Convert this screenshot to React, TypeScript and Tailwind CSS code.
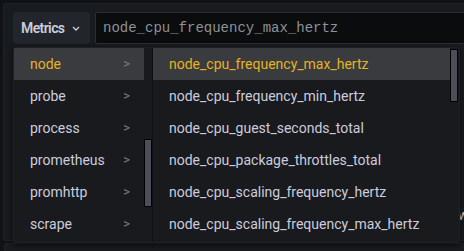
import React from "react";

const left = ["node", "probe", "process", "prometheus", "promhttp", "scrape"];
const right = [
  "node_cpu_frequency_max_hertz",
  "node_cpu_frequency_min_hertz",
  "node_cpu_guest_seconds_total",
  "node_cpu_package_throttles_total",
  "node_cpu_scaling_frequency_hertz",
  "node_cpu_scaling_frequency_max_hertz",
];

export default function App() {
  return (
    <div
      className="w-[464px] h-[251px] bg-[#111217] overflow-hidden relative pt-[3px] pl-[3px]"
      style={{ fontFamily: "Roboto, 'Liberation Sans', sans-serif" }}
    >
      <div className="w-[470px] h-[238px] border border-[#202226] bg-[#181b1f] rounded-[2px] pt-[8px] pl-[9px]">
        <div className="flex h-[32px] gap-[5px]">
          <div className="w-[77px] h-[32px] rounded-[3px] bg-[#22252b] flex items-center pl-[8px] gap-[8px]">
            <span className="text-[14px] font-semibold tracking-[-0.6px] text-[#ccccdc]">Metrics</span>
            <svg width="8" height="5" viewBox="0 0 8 5" className="mt-[1px]">
              <path d="M1 1 L4 4 L7 1" fill="none" stroke="#ccccdc" strokeWidth="1.3" />
            </svg>
          </div>
          <div className="flex-1 h-[32px] bg-[#0b0c0e] border border-[#2b2e34] rounded-[2px] flex items-center pl-[7px]">
            <span
              className="text-[14px] text-[#8e9196]"
              style={{ fontFamily: "'Liberation Mono', monospace" }}
            >
              node_cpu_frequency_max_hertz
            </span>
          </div>
        </div>
      </div>
      <div className="absolute left-[4px] top-[243px] w-[470px] h-[20px] border border-[#202226] bg-[#181b1f] rounded-[2px]" />
      <div className="absolute left-[458px] top-[205px] w-[6px] overflow-hidden text-[14px] text-[#ccccdc]">w</div>

      <div className="absolute left-[13px] top-[47px] w-[447px] h-[196px] bg-[#181a1e] rounded-[2px] shadow-[0_2px_6px_rgba(0,0,0,0.6)] flex border border-[#1f2125]">
        <div className="w-[130px] flex flex-col">
          {left.map((l, i) => (
            <div
              key={l}
              className={`h-[32px] flex items-center pl-[16px] pr-[14px] justify-between text-[14px] ${
                i === 0 ? "bg-[#3a3b3e] text-[#e5b323]" : "text-[#ccccdc]"
              }`}
            >
              <span>{l}</span>
              <span className="text-[#7b8087] text-[13px]">&gt;</span>
            </div>
          ))}
        </div>
        <div className="w-[8px] relative">
          <div className="absolute left-0 top-[91px] w-[8px] h-[68px] bg-[#4c4f5a] border border-black" />
        </div>
        <div className="w-[1px] bg-[#0f1013]" />
        <div className="flex-1 flex flex-col">
          {right.map((r, i) => (
            <div
              key={r}
              className={`h-[32px] flex items-center pl-[16px] text-[14px] ${
                i === 0 ? "bg-[#3a3b3e] text-[#e5b323]" : "text-[#ccccdc]"
              }`}
            >
              {r}
            </div>
          ))}
        </div>
        <div className="w-[9px] relative">
          <div className="absolute left-[0px] top-[1px] w-[8px] h-[53px] bg-[#4c4f5a] border border-black" />
        </div>
      </div>
    </div>
  );
}
